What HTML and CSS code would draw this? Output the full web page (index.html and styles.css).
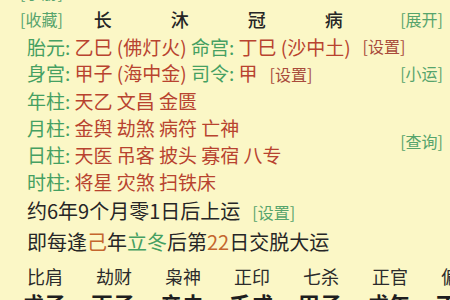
FILE: index.html
```html
<!DOCTYPE html>
<html lang="zh">
<head>
<meta charset="utf-8">
<link rel="stylesheet" href="styles.css">
</head>
<body>
<div class="page">
  <div class="row head partial"><span class="link">[手册]</span></div>
  <div class="row head">
    <span class="link">[收藏]</span>
    <div class="stages"><span>长</span><span>沐</span><span>冠</span><span>病</span></div>
    <span class="link right">[展开]</span>
  </div>
  <div class="row item">
    <span class="lab">胎元:</span>&nbsp;<span class="val">乙巳 (佛灯火)</span>&nbsp;<span class="lab">命宫:</span>&nbsp;<span class="val">丁巳 (沙中土)</span><span class="set gap">[设置]</span>
  </div>
  <div class="row item split">
    <div><span class="lab">身宫:</span>&nbsp;<span class="val">甲子 (海中金)</span>&nbsp;<span class="lab">司令:</span>&nbsp;<span class="val">甲</span><span class="set gap">[设置]</span></div>
    <span class="link">[小运]</span>
  </div>
  <div class="row item"><span class="lab">年柱:</span>&nbsp;<span class="val">天乙 文昌 金匮</span></div>
  <div class="group">
    <div class="rows">
      <div class="row item"><span class="lab">月柱:</span>&nbsp;<span class="val">金舆 劫煞 病符 亡神</span></div>
      <div class="row item"><span class="lab">日柱:</span>&nbsp;<span class="val">天医 吊客 披头 寡宿 八专</span></div>
    </div>
    <span class="link">[查询]</span>
  </div>
  <div class="row item"><span class="lab">时柱:</span>&nbsp;<span class="val">将星 灾煞 扫铁床</span></div>
  <div class="line">约6年9个月零1日后上运<span class="link gap">[设置]</span></div>
  <div class="line">即每逢<span class="orange">己</span>年<span class="green">立冬</span>后第<span class="orange">22</span>日交脱大运</div>
  <div class="gods"><span>比肩</span><span>劫财</span><span>枭神</span><span>正印</span><span>七杀</span><span>正官</span><span>偏财</span></div>
  <div class="pillars"><span>戊子</span><span>丙子</span><span>辛未</span><span>壬戌</span><span>甲子</span><span>戊午</span><span>丁丑</span></div>
</div>
</body>
</html>
```

FILE: styles.css
```css
html, body {
  margin: 0;
  padding: 0;
  background: #fbf7c6;
  overflow: hidden;
}
.page {
  width: 450px;
  height: 300px;
  overflow: hidden;
  font-family: "Noto Sans CJK SC", "Noto Sans", sans-serif;
  font-size: 19px;
  font-weight: 400;
  color: #2b2b2b;
}
.page > .partial {
  margin-top: -21px;
}
.row {
  height: 27px;
  line-height: 27px;
  white-space: nowrap;
  display: flex;
  align-items: center;
}
.head {
  padding-left: 20px;
  padding-right: 7px;
}
.stages {
  display: flex;
  gap: 59px;
  margin-left: 31px;
  flex: 1;
  color: #262626;
  font-size: 18px;
  font-weight: 500;
}
.link {
  color: #56a46c;
  font-size: 16px;
}
.gap {
  margin-left: 12px;
}
.right {
  margin-left: auto;
}
.item {
  padding-left: 27px;
  padding-right: 7px;
}
.split {
  justify-content: space-between;
}
.lab {
  color: #45a062;
}
.val {
  color: #b8432f;
}
.set {
  color: #a84b3b;
  font-size: 16px;
}
.group {
  display: flex;
  align-items: center;
  justify-content: space-between;
  padding-right: 7px;
}
.group .row {
  padding-right: 0;
}
.line {
  padding-left: 27px;
  font-size: 20px;
  height: 31px;
  line-height: 31px;
  white-space: nowrap;
  color: #262626;
}
.line .link {
  font-size: 16px;
}
.orange {
  color: #c4662e;
}
.green {
  color: #45a062;
}
.gods {
  display: flex;
  gap: 33px;
  padding-left: 27px;
  margin-top: 3px;
  height: 32px;
  line-height: 32px;
  font-size: 18px;
  white-space: nowrap;
  color: #2b2b2b;
}
.pillars {
  display: flex;
  gap: 25px;
  padding-left: 22px;
  font-size: 22px;
  font-weight: bold;
  line-height: 22px;
  white-space: nowrap;
  color: #1e1e1e;
}
```
